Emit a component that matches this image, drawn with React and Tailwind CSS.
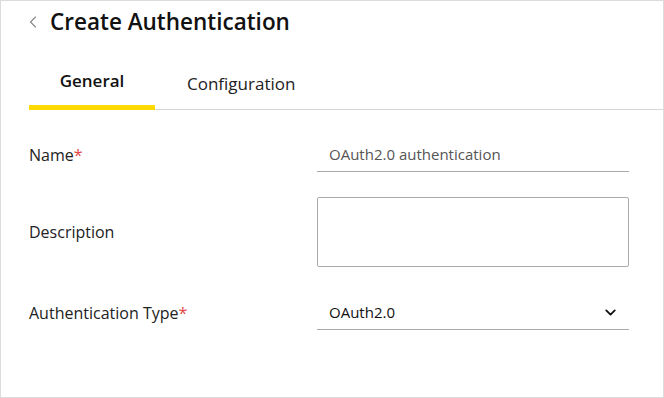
import { ChevronLeft, ChevronDown } from 'lucide-react';

export default function App() {
    return (
        <div
            className="w-[664px] h-[398px] bg-white border border-[#dcdcdc] overflow-hidden"
            style={{ fontFamily: '"Open Sans", sans-serif' }}
        >
            {/* Header */}
            <div className="flex items-center gap-[7px] pl-[22px] pt-[6px] h-[36px]">
                <ChevronLeft className="w-[20px] h-[20px] text-[#888]" strokeWidth={1.4} />
                <h1 className="text-[22.5px] font-semibold text-[#111] leading-none">Create Authentication</h1>
            </div>

            {/* Tabs */}
            <div className="flex ml-[28px] mt-[35px] border-b border-[#d6d6d6]">
                <div className="w-[126px] flex flex-col items-center -mb-px">
                    <span className="text-[17px] font-semibold text-[#111] leading-none pb-[16px]">General</span>
                    <div className="w-full h-[5px] bg-[#ffd900]" />
                </div>
                <div className="ml-[32px]">
                    <span className="text-[17px] text-[#222] leading-none">Configuration</span>
                </div>
            </div>

            {/* Form */}
            <div className="pl-[28px] pr-[34px] pt-[28px] flex flex-col">
                <div className="flex items-center">
                    <label className="w-[288px] text-[16px] text-[#222]">
                        Name<span className="text-[#e04646]">*</span>
                    </label>
                    <div className="flex-1 border-b border-[#aaa] h-[34px] px-3 flex items-center">
                        <span className="text-[15px] text-[#555]">OAuth2.0 authentication</span>
                    </div>
                </div>
                <div className="flex items-center mt-[25px]">
                    <label className="w-[288px] text-[16px] text-[#222]">Description</label>
                    <div className="flex-1 h-[70px] border border-[#aaa] rounded-[2px]" />
                </div>
                <div className="flex items-center mt-[29px]">
                    <label className="w-[288px] text-[16px] text-[#222]">
                        Authentication Type<span className="text-[#e04646]">*</span>
                    </label>
                    <div className="flex-1 border-b border-[#aaa] h-[34px] pl-3 pr-[10px] flex items-center justify-between">
                        <span className="text-[15px] text-[#111]">OAuth2.0</span>
                        <ChevronDown className="w-[17px] h-[17px] text-[#111]" strokeWidth={2.6} />
                    </div>
                </div>
            </div>
        </div>
    );
}
